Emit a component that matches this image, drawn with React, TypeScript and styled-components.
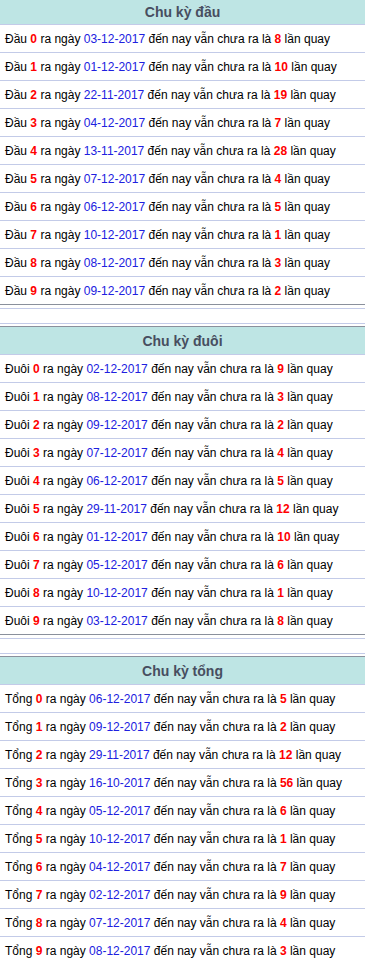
import styled, { createGlobalStyle } from 'styled-components'

interface Item {
  n: number
  date: string
  count: number
}

interface Block {
  title: string
  label: string
  items: Item[]
}

const make = (rows: [string, number][]): Item[] => rows.map(([date, count], n) => ({ n, date, count }))

const blocks: Block[] = [
  {
    title: 'Chu kỳ đầu',
    label: 'Đầu',
    items: make([
      ['03-12-2017', 8],
      ['01-12-2017', 10],
      ['22-11-2017', 19],
      ['04-12-2017', 7],
      ['13-11-2017', 28],
      ['07-12-2017', 4],
      ['06-12-2017', 5],
      ['10-12-2017', 1],
      ['08-12-2017', 3],
      ['09-12-2017', 2],
    ]),
  },
  {
    title: 'Chu kỳ đuôi',
    label: 'Đuôi',
    items: make([
      ['02-12-2017', 9],
      ['08-12-2017', 3],
      ['09-12-2017', 2],
      ['07-12-2017', 4],
      ['06-12-2017', 5],
      ['29-11-2017', 12],
      ['01-12-2017', 10],
      ['05-12-2017', 6],
      ['10-12-2017', 1],
      ['03-12-2017', 8],
    ]),
  },
  {
    title: 'Chu kỳ tổng',
    label: 'Tổng',
    items: make([
      ['06-12-2017', 5],
      ['09-12-2017', 2],
      ['29-11-2017', 12],
      ['16-10-2017', 56],
      ['05-12-2017', 6],
      ['10-12-2017', 1],
      ['04-12-2017', 7],
      ['02-12-2017', 9],
      ['07-12-2017', 4],
      ['08-12-2017', 3],
    ]),
  },
]

const Global = createGlobalStyle`
  html, body {
    margin: 0;
    padding: 0;
    background: #fff;
  }
  body {
    font-family: 'Liberation Sans', Arial, sans-serif;
  }
`

const Page = styled.div`
  width: 365px;
  display: flex;
  flex-direction: column;
`

const Section = styled.div`
  display: flex;
  flex-direction: column;
`

const Title = styled.div<{ $first?: boolean }>`
  height: ${p => (p.$first ? '24px' : '27px')};
  border-top: ${p => (p.$first ? 'none' : '1px solid #8a909c')};
  border-bottom: 1px solid #c3cbe8;
  background: #bee5e4;
  color: #474e60;
  font-size: 14px;
  font-weight: bold;
  display: flex;
  align-items: center;
  justify-content: center;
`

const Row = styled.div<{ $last?: boolean }>`
  height: 27px;
  border-bottom: 1px solid ${p => (p.$last ? '#8a909c' : '#c3cbe8')};
  display: flex;
  align-items: center;
  padding-left: 5px;
  font-size: 12px;
  color: #000;
  white-space: pre;
`

const Num = styled.b`
  color: #f00;
`

const Date = styled.span`
  color: #2020e0;
`

const Spacer = styled.div`
  display: flex;
  flex-direction: column;
  padding-top: 3px;
  height: 18px;
`

const Rule = styled.div<{ $gap?: number }>`
  height: 1px;
  background: #c3cbe8;
  margin-top: ${p => p.$gap ?? 0}px;
`

export default function App() {
  return (
    <Page>
      <Global />
      {blocks.map((b, i) => (
        <Section key={b.title}>
          <Title $first={i == 0}>{b.title}</Title>
          {b.items.map((it, k) => (
            <Row key={it.n} $last={k == b.items.length - 1}>
              {b.label + ' '}
              <Num>{it.n}</Num>
              {' ra ngày '}
              <Date>{it.date}</Date>
              {' đến nay vẫn chưa ra là '}
              <Num>{it.count}</Num>
              {' lần quay'}
            </Row>
          ))}
          {i < blocks.length - 1 && (
            <Spacer>
              <Rule />
              <Rule $gap={14} />
            </Spacer>
          )}
        </Section>
      ))}
    </Page>
  )
}
